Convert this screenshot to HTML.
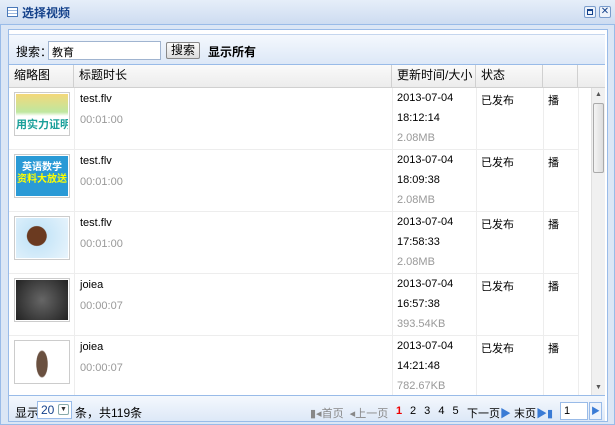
<!DOCTYPE html>
<html><head><meta charset="utf-8"><style>
*{margin:0;padding:0;box-sizing:border-box}
body{width:615px;height:425px;overflow:hidden;background:#fff;font-family:"Liberation Sans","Noto Sans CJK SC",sans-serif;font-size:12px;color:#000;position:relative}
.a{position:absolute}
.win{left:0;top:0;width:615px;height:425px;background:#dbe6f5;border:1px solid #99bbe8}
.title{left:0;top:0;width:615px;height:25px;background:linear-gradient(#e6eef9,#cddcf1);border-bottom:1px solid #99bbe8}
.body{left:8px;top:29px;width:600px;height:393px;background:#fff;border:1px solid #99bbe8}
.tb{left:9px;top:34px;width:596px;height:31px;background:linear-gradient(#f4f8fd,#dde8f7);border-top:1px solid #c5d6ee;border-bottom:1px solid #99bbe8}
.hd{left:9px;top:65px;width:596px;height:23px;background:linear-gradient(#fafafa,#ececec);border-bottom:1px solid #d0d0d0}
.hc{top:65px;height:23px;line-height:21px;padding-left:5px;border-right:1px solid #d0d0d0}
.row{left:9px;width:570px;height:62px;border-bottom:1px solid #ededed}
.vl{width:1px;background:#ededed;height:308px;top:88px}
.t{font-size:11px}
.g{color:#999}
.th{width:56px;height:44px;border:1px solid #ccc;padding:1px;background:#fff}
.ft{left:9px;top:395px;width:596px;height:26px;background:linear-gradient(#f4f8fd,#dde8f7);border-top:1px solid #99bbe8}
</style></head><body>
<div class="a win"></div>
<div class="a title"></div>
<div class="a" style="left:7px;top:7px;width:11px;height:10px;border:1px solid #4a78b8;background:repeating-linear-gradient(#fff 0 2px,#9bb7df 2px 3px)"></div>
<div class="a" style="left:22px;top:4px;font-weight:bold;color:#15428b;font-size:12px">选择视频</div>
<div class="a" style="left:584px;top:6px;width:12px;height:12px;border:1px solid #7a9ccc;background:#eef3fb;border-radius:2px"><div style="margin:2px;width:6px;height:6px;border:1px solid #15428b;border-top-width:2px"></div></div>
<div class="a" style="left:599px;top:6px;width:12px;height:12px;border:1px solid #7a9ccc;background:#eef3fb;border-radius:2px;font-size:10px;line-height:10px;text-align:center;color:#15428b">✕</div>
<div class="a body"></div>
<div class="a tb"></div>
<div class="a" style="left:16px;top:43px">搜索：</div>
<div class="a" style="left:48px;top:41px;width:113px;height:19px;border:1px solid #a0b4d0;background:#fff;padding:2px 3px;font-size:11px">教育</div>
<div class="a" style="left:166px;top:42px;width:34px;height:17px;border:1px solid #888;border-radius:2px;background:linear-gradient(#fafafa,#ddd);text-align:center;line-height:15px">搜索</div>
<div class="a" style="left:208px;top:43px;font-weight:bold">显示所有</div>
<div class="a hd"></div>
<div class="a hc" style="left:9px;width:65px">缩略图</div>
<div class="a hc" style="left:74px;width:318px">标题时长</div>
<div class="a hc" style="left:392px;width:84px">更新时间/大小</div>
<div class="a hc" style="left:476px;width:67px">状态</div>
<div class="a hc" style="left:543px;width:35px"></div>
<div class="a vl" style="left:74px"></div>
<div class="a vl" style="left:392px"></div>
<div class="a vl" style="left:476px"></div>
<div class="a vl" style="left:543px"></div>
<div class="a vl" style="left:578px"></div>

<div class="a row" style="top:88px"></div>
<div class="a row" style="top:150px"></div>
<div class="a row" style="top:212px"></div>
<div class="a row" style="top:274px"></div>
<div class="a row" style="top:336px"></div>

<div class="a th" style="left:14px;top:92px"><div style="height:100%;background:linear-gradient(#f3d87a,#bfe7a0 45%,#fff 55%);color:#1aa09a;font-weight:bold;font-size:11px;padding-top:22px;white-space:nowrap;overflow:hidden">用实力证明自己</div></div>
<div class="a th" style="left:14px;top:154px"><div style="height:100%;background:#2a9ad6;color:#fff;font-weight:bold;font-size:10px;text-align:center;padding-top:6px;line-height:12px">英语数学<br><span style="color:#ff0">资料大放送</span></div></div>
<div class="a th" style="left:14px;top:216px"><div style="height:100%;background:radial-gradient(circle at 40% 45%,#6b3a20 0 25%,#c8e6f8 27%,#e8f4fc)"></div></div>
<div class="a th" style="left:14px;top:278px"><div style="height:100%;background:radial-gradient(circle at 50% 50%,#666,#222)"></div></div>
<div class="a th" style="left:14px;top:340px"><div style="height:100%;background:radial-gradient(ellipse 6px 14px at 50% 55%,#6a5040 0 90%,#fff)"></div></div>

<div class="a t" style="left:80px;top:93px">test.flv</div><div class="a t g" style="left:80px;top:114px">00:01:00</div>
<div class="a t" style="left:80px;top:155px">test.flv</div><div class="a t g" style="left:80px;top:176px">00:01:00</div>
<div class="a t" style="left:80px;top:217px">test.flv</div><div class="a t g" style="left:80px;top:238px">00:01:00</div>
<div class="a t" style="left:80px;top:279px">joiea</div><div class="a t g" style="left:80px;top:300px">00:00:07</div>
<div class="a t" style="left:80px;top:341px">joiea</div><div class="a t g" style="left:80px;top:362px">00:00:07</div>

<div class="a t" style="left:397px;top:88px;line-height:20px">2013-07-04<br>18:12:14<br><span class="g">2.08MB</span></div>
<div class="a t" style="left:397px;top:150px;line-height:20px">2013-07-04<br>18:09:38<br><span class="g">2.08MB</span></div>
<div class="a t" style="left:397px;top:212px;line-height:20px">2013-07-04<br>17:58:33<br><span class="g">2.08MB</span></div>
<div class="a t" style="left:397px;top:274px;line-height:20px">2013-07-04<br>16:57:38<br><span class="g">393.54KB</span></div>
<div class="a t" style="left:397px;top:336px;line-height:20px">2013-07-04<br>14:21:48<br><span class="g">782.67KB</span></div>

<div class="a t" style="left:481px;top:92px">已发布</div><div class="a t" style="left:548px;top:92px">播</div>
<div class="a t" style="left:481px;top:154px">已发布</div><div class="a t" style="left:548px;top:154px">播</div>
<div class="a t" style="left:481px;top:216px">已发布</div><div class="a t" style="left:548px;top:216px">播</div>
<div class="a t" style="left:481px;top:278px">已发布</div><div class="a t" style="left:548px;top:278px">播</div>
<div class="a t" style="left:481px;top:340px">已发布</div><div class="a t" style="left:548px;top:340px">播</div>

<div class="a" style="left:591px;top:88px;width:14px;height:307px;background:#f0f0f0;border-left:1px solid #e0e0e0"></div>
<div class="a" style="left:595px;top:91px;font-size:7px;color:#555">▲</div>
<div class="a" style="left:593px;top:103px;width:11px;height:70px;background:linear-gradient(90deg,#f4f4f4,#ddd);border:1px solid #aaa;border-radius:2px"></div>
<div class="a" style="left:595px;top:384px;font-size:7px;color:#555">▼</div>

<div class="a ft"></div>
<div class="a" style="left:15px;top:404px">显示</div>
<div class="a" style="left:37px;top:401px;width:35px;height:18px;border:1px solid #99bbe8;background:#fff;padding-left:3px;line-height:16px;color:#15428b">20<span class="a" style="left:20px;top:2px;width:11px;height:11px;border:1px solid #8aa;border-radius:2px;font-size:7px;line-height:10px;text-align:center;color:#333">▼</span></div>
<div class="a" style="left:75px;top:404px">条，共119条</div>
<div class="a t" style="left:310px;top:405px;color:#888">▮◂首页 &nbsp;◂上一页</div>
<div class="a t" style="left:396px;top:405px;color:#e00;font-weight:bold">1</div>
<div class="a t" style="left:410px;top:405px;word-spacing:5px">2 3 4 5</div>
<div class="a t" style="left:467px;top:405px">下一页<span style="color:#3a7bd5">▶</span> 末页<span style="color:#3a7bd5">▶▮</span></div>
<div class="a" style="left:560px;top:402px;width:28px;height:18px;border:1px solid #99bbe8;background:#fff;padding-left:3px;font-size:11px;line-height:16px">1</div>
<div class="a" style="left:589px;top:402px;width:13px;height:18px;border:1px solid #99bbe8;background:#eef3fb;color:#3a7bd5;font-size:9px;line-height:16px;text-align:center">▶</div>
</body></html>
